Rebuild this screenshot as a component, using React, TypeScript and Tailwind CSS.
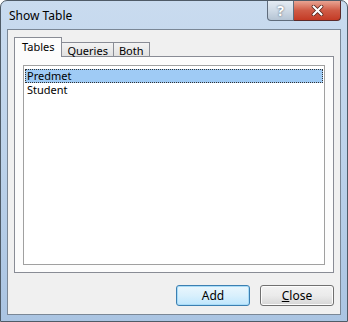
import React from "react";

const font = { fontFamily: '"Noto Sans", "Open Sans", Arial, sans-serif' };

function CaptionButtons() {
  return (
    <div className="flex h-[20px] self-start">
      <div className="flex w-[27px] items-center justify-center rounded-bl-[4px] border border-t-0 border-[#5f6c7c] bg-gradient-to-b from-[#e4ebf3] via-[#cfdae6] to-[#b5c4d4] text-[14px] font-bold leading-none text-white [text-shadow:0_0_2px_#3c4a5a]">
        ?
      </div>
      <div className="flex w-[47px] items-center justify-center rounded-br-[4px] border border-l-0 border-t-0 border-[#5b2a2a] bg-gradient-to-b from-[#e8a493] via-[#cf5a45] to-[#c43a24]">
        <svg width="13" height="11" viewBox="0 0 13 11">
          <path d="M2.5 1.5 L10.5 9.5 M10.5 1.5 L2.5 9.5" stroke="#4a1c14" strokeWidth="3.6" strokeLinecap="round" />
          <path d="M2.5 1.5 L10.5 9.5 M10.5 1.5 L2.5 9.5" stroke="#ffffff" strokeWidth="2.2" strokeLinecap="round" />
        </svg>
      </div>
    </div>
  );
}

function Tab({ label, active }: { label: string; active?: boolean }) {
  if (active) {
    return (
      <div className="relative z-10 -mr-[1px] mb-[-1px] flex h-[20px] items-start border border-b-0 border-[#898c95] bg-[#fcfcfc] px-[7px] pt-[2px] leading-[13px]">
        {label}
      </div>
    );
  }
  return (
    <div className="-mr-[1px] flex h-[14px] items-center border border-b-0 border-[#898c95] bg-gradient-to-b from-[#f3f3f3] to-[#e1e1e1] px-[5px] pt-[2px] leading-[12px]">
      {label}
    </div>
  );
}

export default function App() {
  return (
    <div className="h-[322px] w-[348px] overflow-hidden bg-white text-[11px] text-black" style={font}>
      <div className="flex h-full flex-col rounded-t-[7px] border border-[#4f5b67] bg-gradient-to-b from-[#c9dbef] via-[#bcd2ea] to-[#aac4e2] px-[6px]">
        <div className="flex h-[28px] items-start justify-between">
          <div className="pl-[2px] pt-[6px] text-[12px] text-black">Show Table</div>
          <CaptionButtons />
        </div>
        <div className="flex h-[286px] flex-col border border-[#7a8796] bg-[#f0f0f0]">
          <div className="px-[6px] pt-[7px]">
            <div className="flex items-end">
              <Tab label="Tables" active />
              <Tab label="Queries" />
              <Tab label="Both" />
            </div>
            <div className="h-[217px] border border-[#898c95] bg-[#fcfcfc] px-[8px] pt-[8px]">
              <div className="h-[200px] border border-[#a0a0a0] bg-white px-[1px] pt-[3px]">
                <div className="flex h-[14px] items-center border border-dotted border-[#333] bg-[#9fcbf5] px-[1px] leading-[12px]">Predmet</div>
                <div className="flex h-[14px] items-center px-[2px] leading-[12px]">Student</div>
              </div>
            </div>
          </div>
          <div className="flex justify-end gap-[10px] px-[6px] pt-[12px]">
            <button className="h-[21px] w-[74px] rounded-[3px] border border-[#3c7fb1] bg-gradient-to-b from-[#eaf6fd] via-[#d9f0fc] to-[#bee6fd] text-[12px] shadow-[inset_0_0_0_1px_#a8dcf8]">
              Add
            </button>
            <button className="h-[21px] w-[74px] rounded-[3px] border border-[#707070] bg-gradient-to-b from-[#f2f2f2] via-[#ebebeb] to-[#d6d6d6] text-[12px] shadow-[inset_0_0_0_1px_#fcfcfc]">
              <span className="underline">C</span>lose
            </button>
          </div>
        </div>
      </div>
    </div>
  );
}
